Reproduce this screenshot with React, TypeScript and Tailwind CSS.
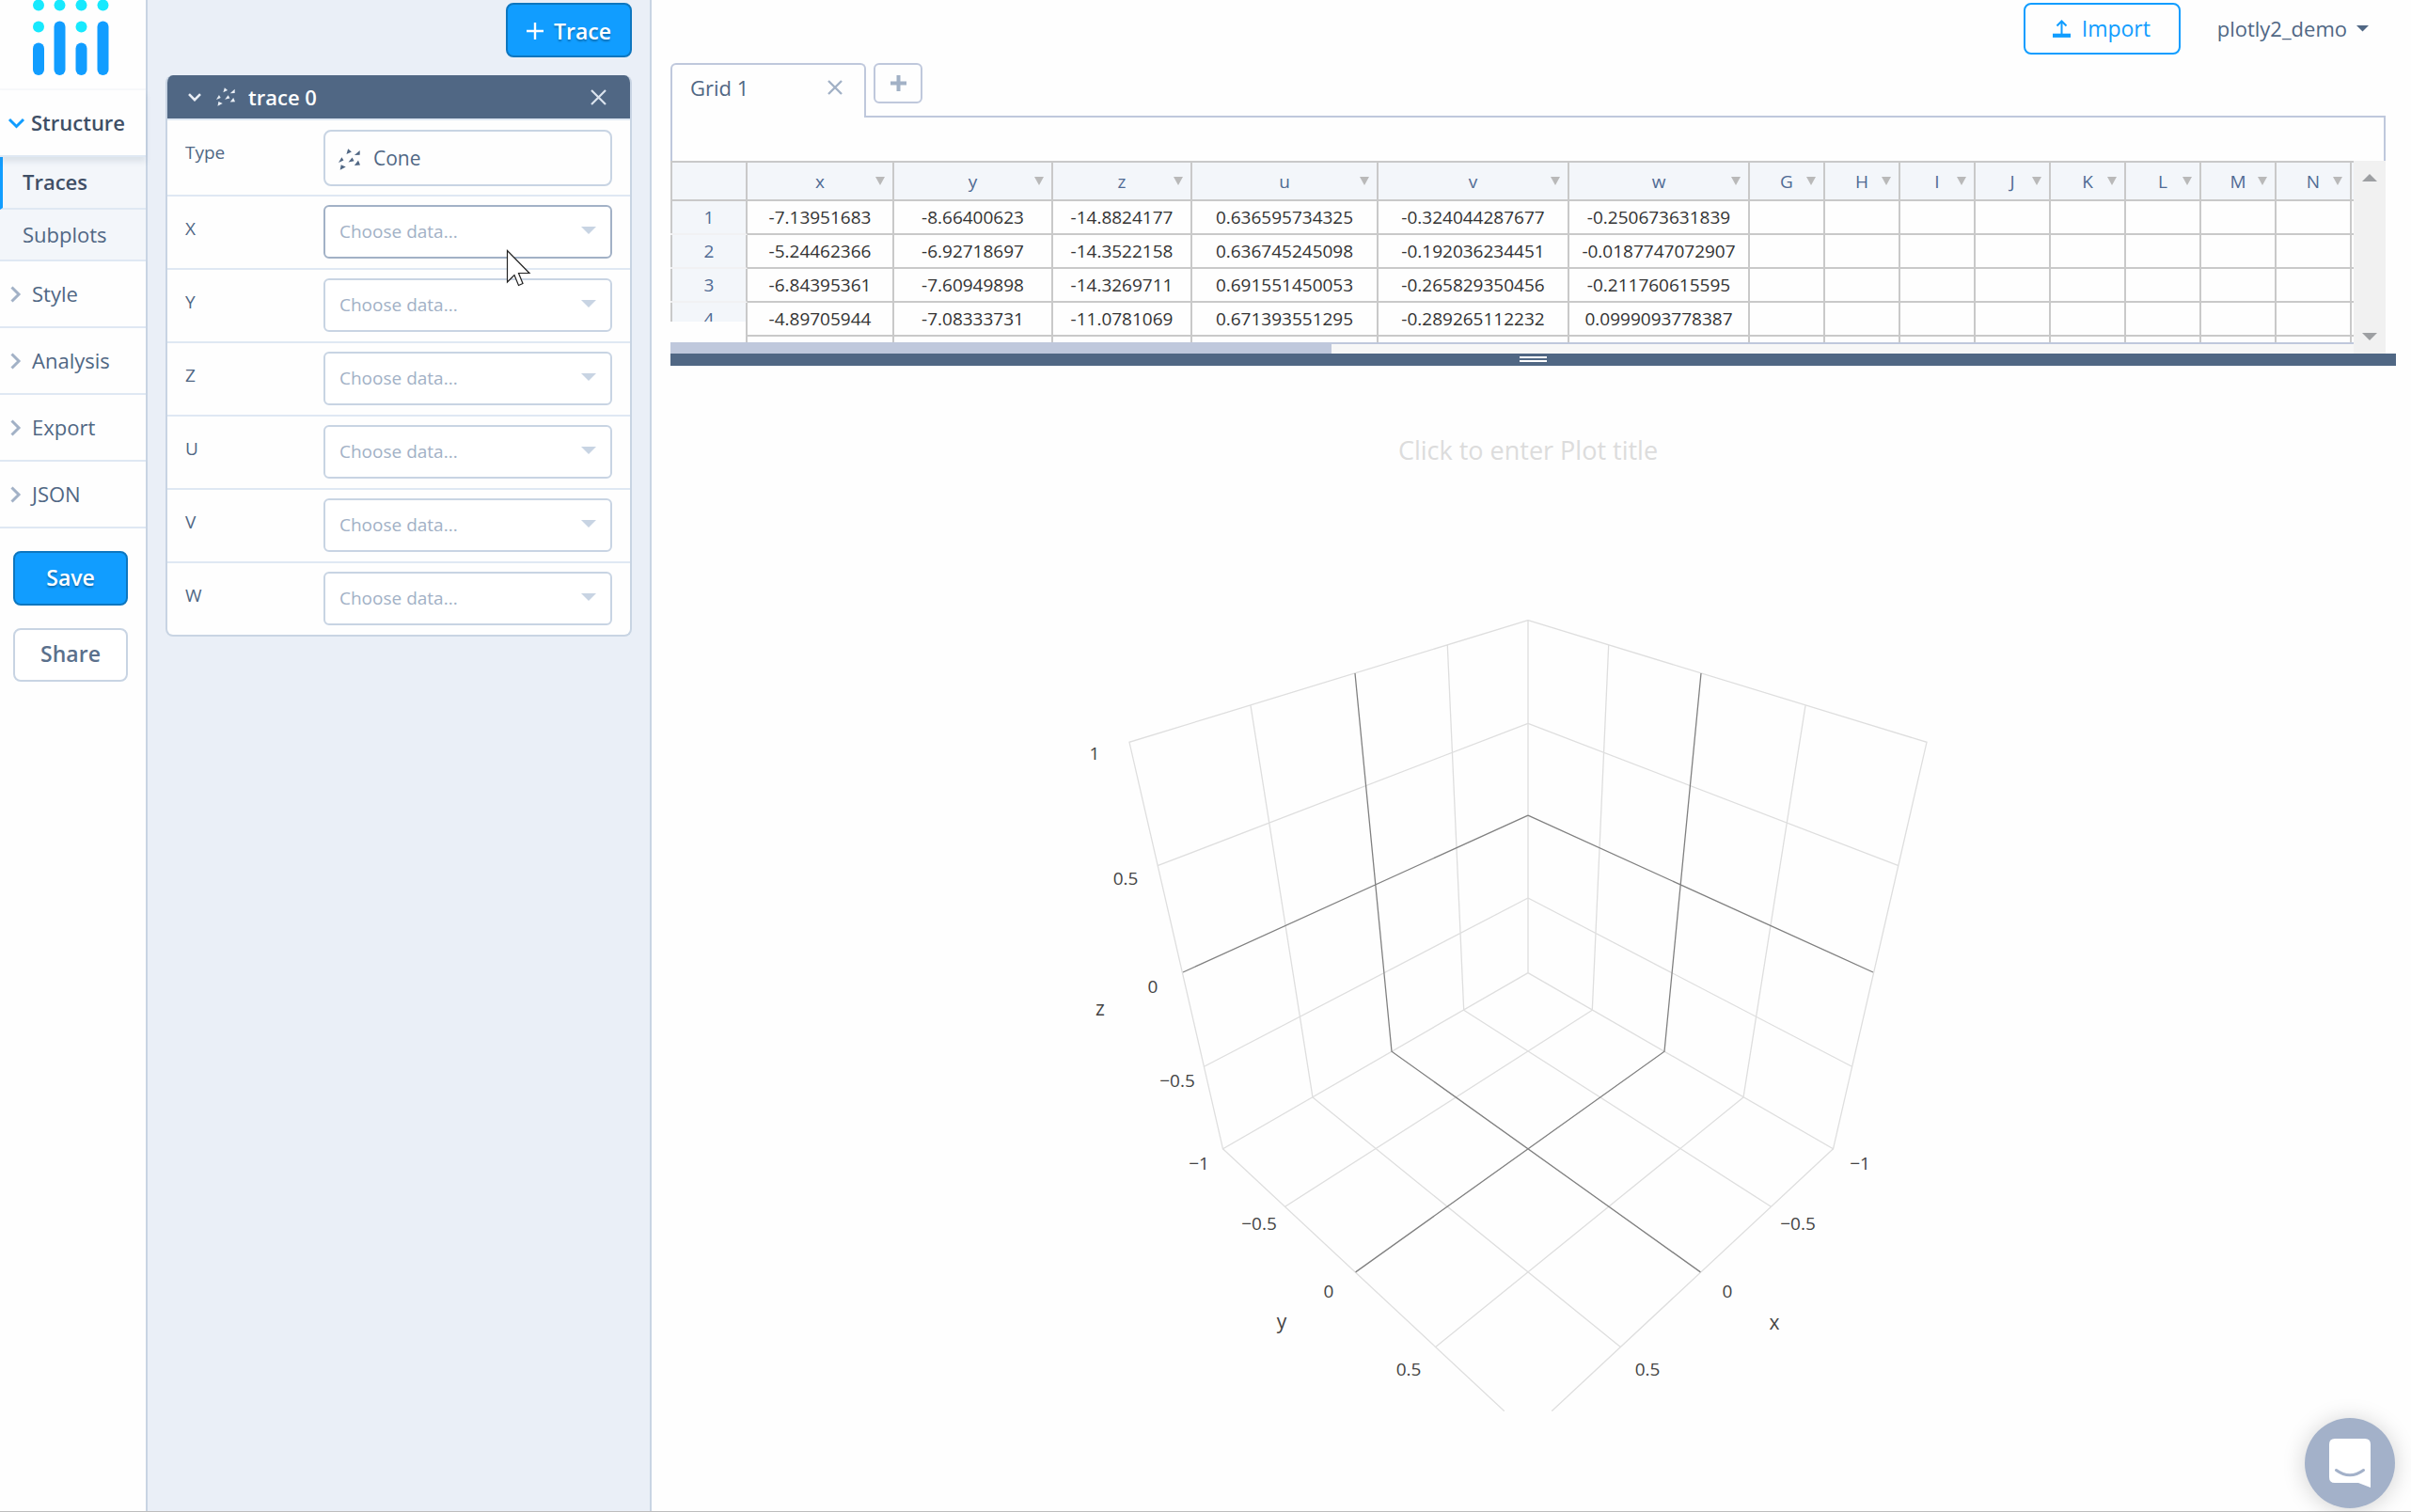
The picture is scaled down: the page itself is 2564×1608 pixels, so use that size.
import React from "react";

const DATA_FIELDS = ["X", "Y", "Z", "U", "V", "W"];

const COLUMNS = [
  { name: "x", width: "w-[156px]" },
  { name: "y", width: "w-[169px]" },
  { name: "z", width: "w-[148px]" },
  { name: "u", width: "w-[198px]" },
  { name: "v", width: "w-[203px]" },
  { name: "w", width: "w-[192px]" },
  { name: "G", width: "w-[80px]" },
  { name: "H", width: "w-[80px]" },
  { name: "I", width: "w-[80px]" },
  { name: "J", width: "w-[80px]" },
  { name: "K", width: "w-[80px]" },
  { name: "L", width: "w-[80px]" },
  { name: "M", width: "w-[80px]" },
  { name: "N", width: "w-[80px]" },
];

const ROWS = [
  ["-7.13951683", "-8.66400623", "-14.8824177", "0.636595734325", "-0.324044287677", "-0.250673631839"],
  ["-5.24462366", "-6.92718697", "-14.3522158", "0.636745245098", "-0.192036234451", "-0.0187747072907"],
  ["-6.84395361", "-7.60949898", "-14.3269711", "0.691551450053", "-0.265829350456", "-0.211760615595"],
  ["-4.89705944", "-7.08333731", "-11.0781069", "0.671393551295", "-0.289265112232", "0.0999093778387"],
];

function Logo() {
  return (
    <svg width="82" height="82" viewBox="34 0 82 82" aria-label="Plotly">
      <g fill="#17e9fe">
        <circle cx="41" cy="5.5" r="6" />
        <circle cx="63.5" cy="5.5" r="6" />
        <circle cx="86.5" cy="5.5" r="6" />
        <circle cx="109.5" cy="5.5" r="6" />
        <circle cx="41" cy="28.5" r="6" />
        <circle cx="86.5" cy="28.5" r="6" />
      </g>
      <g fill="#119dff">
        <rect x="35" y="45.5" width="12" height="34.5" rx="6" />
        <rect x="57.5" y="22.5" width="12" height="57.5" rx="6" />
        <rect x="80.5" y="45.5" width="12" height="34.5" rx="6" />
        <rect x="103.5" y="22.5" width="12" height="57.5" rx="6" />
      </g>
    </svg>
  );
}

function ConeIcon({ size }: { size: number }) {
  return (
    <svg width={size} height={size} viewBox="0 0 68 66" fill="currentColor" aria-hidden="true">
      <path d="M30 0 41 9 25 17Z" />
      <path d="M67 5 67 19 50 20Z" />
      <path d="M10 26 16 36 0 43Z" />
      <path d="M43 27 49 38 31 42Z" />
      <path d="M62 36 68 51 50 52Z" />
      <path d="M8 50 23 57 5 66Z" />
    </svg>
  );
}

function NavItem({ label }: { label: string }) {
  return (
    <button className="flex h-[71px] w-full items-center border-b-2 border-[#dfe8f3] pl-[11px] text-left text-[22px] text-[#506784]">
      <svg width="12" height="18" viewBox="0 0 12 18" fill="none" stroke="#a2b1c6" strokeWidth="3" aria-hidden="true">
        <path d="M1.5 1.5 9 9 1.5 16.5" />
      </svg>
      <span className="ml-[11px]">{label}</span>
    </button>
  );
}

function Sidebar() {
  return (
    <nav className="flex w-[157px] shrink-0 flex-col border-r-2 border-[#c8d4e3] bg-[#fefefe]">
      <div className="flex h-24 justify-center border-b-2 border-[#f7f8fa] pr-[5px]">
        <Logo />
      </div>
      <button className="relative flex h-[71px] w-full items-center border-b-2 border-[#dfe8f3] pl-2 text-left text-[22px] font-semibold text-[#3f4f66] shadow-[0_5px_6px_rgba(80,103,132,0.14)]">
        <svg width="19" height="12" viewBox="0 0 19 12" fill="none" stroke="#119dff" strokeWidth="3" aria-hidden="true">
          <path d="M2 2 9.5 9.5 17 2" />
        </svg>
        <span className="ml-[6px]">Structure</span>
      </button>
      <button className="h-14 w-full border-b-2 border-l-[3px] border-b-[#dfe8f3] border-l-[#119dff] bg-[#f3f6fa] pb-[2px] pl-[21px] text-left text-[22px] font-semibold text-[#3f4f66]">
        Traces
      </button>
      <button className="h-[55px] w-full border-b-2 border-[#dfe8f3] bg-[#f3f6fa] pl-6 text-left text-[22px] text-[#506784]">
        Subplots
      </button>
      <NavItem label="Style" />
      <NavItem label="Analysis" />
      <NavItem label="Export" />
      <NavItem label="JSON" />
      <div className="flex flex-col gap-6 pt-6 pr-[19px] pl-[14px]">
        <button className="h-[58px] rounded-lg border-2 border-[#0d76bf] bg-[#119dff] pb-[2px] text-[23px] font-semibold text-white [text-shadow:0_2px_2px_rgba(0,0,0,0.3)]">
          Save
        </button>
        <button className="h-[57px] rounded-lg border-2 border-[#c8d4e3] bg-white pb-[2px] text-[23px] font-semibold text-[#5a708c]">
          Share
        </button>
      </div>
    </nav>
  );
}

function DataField({ name, active, last }: { name: string; active: boolean; last: boolean }) {
  const id = "field-" + name;
  return (
    <div className={last ? "flex h-[76px] px-[19px]" : "flex h-[78px] border-b-2 border-[#dfe8f3] px-[19px]"}>
      <label htmlFor={id} className="w-[147px] shrink-0 pt-5 text-[19px] leading-7">
        {name}
      </label>
      <div className="relative mt-[9px] h-[57px] flex-1">
        <select
          id={id}
          defaultValue=""
          className={
            active
              ? "h-full w-full appearance-none rounded-md border-2 border-[#a2b1c6] bg-white pl-[15px] text-[19px] text-[#a2b1c6]"
              : "h-full w-full appearance-none rounded-md border-2 border-[#c8d4e3] bg-white pl-[15px] text-[19px] text-[#a2b1c6]"
          }
        >
          <option value="">Choose data...</option>
        </select>
        <svg className="pointer-events-none absolute top-[23px] right-[17px]" width="16" height="8" viewBox="0 0 16 8" aria-hidden="true">
          <path d="M0 0H16L8 8Z" fill="#c8d4e3" />
        </svg>
      </div>
    </div>
  );
}

function TracePanel() {
  return (
    <aside className="w-[536px] shrink-0 border-r-2 border-[#c8d4e3] bg-[#eaeff7] pt-[3px] pr-[19px] pl-[19px] text-[#506784]">
      <div className="flex justify-end">
        <button className="flex h-[58px] w-[134px] items-center justify-center gap-[11px] rounded-lg border-2 border-[#0d76bf] bg-[#119dff] pt-[2px] text-[23px] font-semibold text-white [text-shadow:0_2px_2px_rgba(0,0,0,0.3)]">
          <svg width="18" height="18" viewBox="0 0 18 18" stroke="#fff" strokeWidth="2.4" aria-hidden="true">
            <path d="M9 0V18M0 9H18" />
          </svg>
          Trace
        </button>
      </div>
      <section className="mt-[19px] overflow-hidden rounded-lg border-2 border-t-0 border-[#c8d4e3] bg-[#fefefe]">
        <header className="-mx-[2px] flex h-[46px] items-center bg-[#506784] pr-[27px] pl-6 text-white">
          <button aria-label="Collapse trace">
            <svg width="14" height="9" viewBox="0 0 14 9" fill="none" stroke="#e9eef5" strokeWidth="2.6" aria-hidden="true">
              <path d="M1 1.2 7 7.2 13 1.2" />
            </svg>
          </button>
          <span className="ml-4 text-[#e9eef5]">
            <ConeIcon size={20} />
          </span>
          <h2 className="ml-[14px] text-[22px] font-semibold">trace 0</h2>
          <button aria-label="Delete trace" className="ml-auto">
            <svg width="17" height="17" viewBox="0 0 17 17" fill="none" stroke="#dbe3ee" strokeWidth="2.2" aria-hidden="true">
              <path d="M1 1 16 16M16 1 1 16" />
            </svg>
          </button>
        </header>
        <div className="flex h-[83px] border-y-2 border-[#dfe8f3] px-[19px]">
          <label htmlFor="field-type" className="w-[147px] shrink-0 pt-5 text-[19px] leading-7">
            Type
          </label>
          <button id="field-type" className="mt-[10px] flex h-[60px] flex-1 items-center gap-[14px] rounded-lg border-2 border-[#c8d4e3] pt-[2px] pl-[14px] text-[21px]">
            <ConeIcon size={23} />
            Cone
          </button>
        </div>
        {DATA_FIELDS.map((name, i) => (
          <DataField key={name} name={name} active={name === "X"} last={i === DATA_FIELDS.length - 1} />
        ))}
      </section>
    </aside>
  );
}

function TopBar() {
  return (
    <header className="flex h-[67px] items-start justify-end gap-[39px] pt-[3px] pr-[29px] text-[22px]">
      <button className="flex h-[55px] w-[167px] items-center gap-3 rounded-lg border-2 border-[#119dff] pl-[29px] text-[23px] text-[#119dff]">
        <svg width="19" height="19" viewBox="0 0 19 19" fill="none" stroke="#119dff" strokeWidth="2" aria-hidden="true">
          <path d="M9.5 15V2M4.5 6.5 9.5 1.5 14.5 6.5" />
          <path d="M0 16.8H19" strokeWidth="4.2" />
        </svg>
        Import
      </button>
      <button className="flex h-[55px] items-center gap-[10px] text-[#506784]">
        plotly2_demo
        <svg width="13" height="7" viewBox="0 0 13 7" aria-hidden="true">
          <path d="M0 0H13L6.5 6.5Z" fill="#506784" />
        </svg>
      </button>
    </header>
  );
}

function GridTabs() {
  return (
    <div className="mr-[11px] flex h-[58px]">
      <div className="flex w-[208px] items-center justify-between rounded-t-md border-2 border-b-0 border-[#bfc8dc] pr-[23px] pb-2 pl-[19px]">
        <button className="text-[22px] text-[#506784]">Grid 1</button>
        <button aria-label="Close Grid 1">
          <svg width="16" height="16" viewBox="0 0 16 16" stroke="#a2b1c6" strokeWidth="2.4" aria-hidden="true">
            <path d="M1 1 15 15M15 1 1 15" />
          </svg>
        </button>
      </div>
      <div className="flex-1 border-b-2 border-[#bfc8dc] pl-2">
        <button aria-label="Add grid" className="flex h-[43px] w-[52px] items-center justify-center rounded-md border-2 border-[#bfc8dc]">
          <svg width="17" height="17" viewBox="0 0 17 17" stroke="#a2b1c6" strokeWidth="4" aria-hidden="true">
            <path d="M8.5 0V17M0 8.5H17" />
          </svg>
        </button>
      </div>
    </div>
  );
}

function DataGrid() {
  return (
    <div className="mr-[11px] flex h-[205px]">
      <div className="min-w-0 flex-1">
        <div className="h-[193px] overflow-hidden">
          <table className="w-full min-w-[1790px] table-fixed border-separate border-spacing-0 border-t-2 border-[#c9c9c9] text-center text-[19px] leading-7 text-[#333]">
            <colgroup>
              <col className="w-[82px]" />
              {COLUMNS.map((c) => (
                <col key={c.name} className={c.width} />
              ))}
              <col />
            </colgroup>
            <thead>
              <tr className="h-[41px] bg-[#f3f6fa] text-[#506b94]">
                <td className="border-x-2 border-b-2 border-[#c9c9c9] p-0" />
                {COLUMNS.map((c) => (
                  <th key={c.name} scope="col" className="relative border-r-2 border-b-2 border-[#c9c9c9] p-0 font-normal">
                    {c.name}
                    <svg className="absolute top-[15px] right-[8px]" width="10" height="9" viewBox="0 0 10 9" aria-hidden="true">
                      <path d="M0 0H10L5 9Z" fill="#b9b9b9" />
                    </svg>
                  </th>
                ))}
                <td className="border-b-2 border-[#c9c9c9] p-0" />
              </tr>
            </thead>
            <tbody>
              {ROWS.map((row, r) => (
                <tr key={r} className="h-9">
                  <th
                    scope="row"
                    className={
                      r === 3
                        ? "border-r-2 border-[#c9c9c9] p-0 align-top font-normal text-[#506b94]"
                        : "border-r-2 border-b-2 border-r-[#c9c9c9] border-b-[#f1f1f3] p-0 align-top font-normal text-[#506b94]"
                    }
                  >
                    <div
                      className={
                        r === 3
                          ? "h-5 overflow-hidden border-l-2 border-[#c9c9c9] bg-[#f3f6fa] leading-[34px]"
                          : "h-[34px] border-l-2 border-[#c9c9c9] bg-[#f3f6fa] leading-[34px]"
                      }
                    >
                      {r + 1}
                    </div>
                  </th>
                  {COLUMNS.map((c, i) => (
                    <td key={c.name} className="border-r-2 border-b-2 border-[#c9c9c9] p-0">
                      {row[i] ?? ""}
                    </td>
                  ))}
                  <td className="border-b-2 border-[#c9c9c9] p-0" />
                </tr>
              ))}
              <tr className="h-9">
                <td className="border-r-2 border-[#c9c9c9] p-0" />
                {COLUMNS.map((c) => (
                  <td key={c.name} className="border-r-2 border-[#c9c9c9] p-0" />
                ))}
                <td className="p-0" />
              </tr>
            </tbody>
          </table>
        </div>
        <div className="h-3 border-t-2 border-[#bfc8dc] bg-[#f7f7f7]">
          <div className="h-full w-[703px] bg-[#bfc8dc]" />
        </div>
      </div>
      <div className="flex w-[34px] shrink-0 flex-col items-center justify-between bg-[#f1f1f1] pt-[14px] pb-[14px]">
        <svg width="16" height="8" viewBox="0 0 16 8" aria-hidden="true">
          <path d="M8 0 16 8H0Z" fill="#9d9fa2" />
        </svg>
        <svg width="16" height="8" viewBox="0 0 16 8" aria-hidden="true">
          <path d="M0 0H16L8 8Z" fill="#9d9fa2" />
        </svg>
      </div>
    </div>
  );
}

const LIGHT_LINES =
  // upper rim and vertical edges of the wall
  "M0 19.6L-424 149.3L-324.5 581.8L0 394.6M-295 110.4L-229 527.1M-85.7 46L-68.3 434.3" +
  // height lines at 0.5 and -0.5
  "M-394 280.7L0 129.3M-344 494L0 315" +
  // floor outline and floor lines
  "M-324.5 581.8L-25.2 860.7M-68.3 434.3L258.4 643.2M-229 527.1L98.3 792.5";

const DARK_LINES = "M-184 76L-145 478.2L183.4 712.9M-367 394L0 227.1";

const LABELS = [
  { x: 1164, y: 801, text: "1" },
  { x: 1197, y: 934, text: "0.5" },
  { x: 1226, y: 1049, text: "0" },
  { x: 1252, y: 1149, text: "−0.5" },
  { x: 1275, y: 1237, text: "−1" },
  { x: 1339, y: 1301, text: "−0.5" },
  { x: 1413, y: 1373, text: "0" },
  { x: 1498, y: 1456, text: "0.5" },
  { x: 1978, y: 1237, text: "−1" },
  { x: 1912, y: 1301, text: "−0.5" },
  { x: 1837, y: 1373, text: "0" },
  { x: 1752, y: 1456, text: "0.5" },
];

const AXIS_TITLES = [
  { x: 1170, y: 1080, text: "z" },
  { x: 1363, y: 1413, text: "y" },
  { x: 1887, y: 1414, text: "x" },
];

function ScenePlot() {
  return (
    <svg width="950" height="861" viewBox="1150 640 950 861" className="max-w-full" role="img" aria-label="Empty 3D scene">
      <g fill="none">
        <g stroke="#dedede" strokeWidth="1.3">
          <path transform="translate(1625 640)" d={LIGHT_LINES} />
          <path transform="translate(1625 640) scale(-1 1)" d={LIGHT_LINES} />
          <path d="M1625 659.6V1034.6" />
        </g>
        <g stroke="#808080" strokeWidth="1.3">
          <path transform="translate(1625 640)" d={DARK_LINES} />
          <path transform="translate(1625 640) scale(-1 1)" d={DARK_LINES} />
        </g>
      </g>
      <g fill="#444" textAnchor="middle" fontSize="19">
        {LABELS.map((l) => (
          <text key={l.x + "-" + l.y} x={l.x} y={l.y + 7}>
            {l.text}
          </text>
        ))}
      </g>
      <g fill="#444" textAnchor="middle" fontSize="21">
        {AXIS_TITLES.map((l) => (
          <text key={l.text} x={l.x} y={l.y}>
            {l.text}
          </text>
        ))}
      </g>
    </svg>
  );
}

export default function App() {
  return (
    <div className="flex min-h-screen border-b border-[#bdbdbd] bg-[#fefefe] font-['Open_Sans',sans-serif]">
      <Sidebar />
      <TracePanel />
      <main className="flex min-w-0 flex-1 flex-col pr-4 pl-5">
        <TopBar />
        <GridTabs />
        <div className="mr-[11px] h-[46px] border-x-2 border-[#bfc8dc]" />
        <DataGrid />
        <div className="flex h-[13px] flex-col items-center justify-center gap-[2px] bg-[#506784] pb-px">
          <span className="h-[2px] w-[29px] bg-white" />
          <span className="h-[2px] w-[29px] bg-white" />
        </div>
        <section className="mr-[11px] flex flex-col items-center pt-[70px]">
          <button className="mb-[141px] h-10 text-[27px] text-[#dcdcdc]">Click to enter Plot title</button>
          <ScenePlot />
        </section>
      </main>
      <button
        aria-label="Open chat"
        className="fixed right-[17px] bottom-1 flex size-24 items-center justify-center rounded-full bg-[#a3b1c9] shadow-[0_2px_24px_rgba(0,0,0,0.18)]"
      >
        <svg width="44" height="52" viewBox="0 0 44 52" aria-hidden="true">
          <path d="M6 0H38Q44 0 44 6V52L31 47H6Q0 47 0 41V6Q0 0 6 0Z" fill="#fff" />
          <path d="M7.500 33.500Q22 44 36.500 33.500" fill="none" stroke="#a3b1c9" strokeWidth="3" strokeLinecap="round" />
        </svg>
      </button>
      <svg className="pointer-events-none absolute top-[265px] left-[538px]" width="28" height="41" viewBox="-1 -1 28 41" aria-hidden="true">
        <path d="M.5.500V34L8 26.500 12.500 37.500 17 35.500 12.500 24.500H24Z" fill="#fff" stroke="#222" strokeWidth="1.2" />
      </svg>
    </div>
  );
}
